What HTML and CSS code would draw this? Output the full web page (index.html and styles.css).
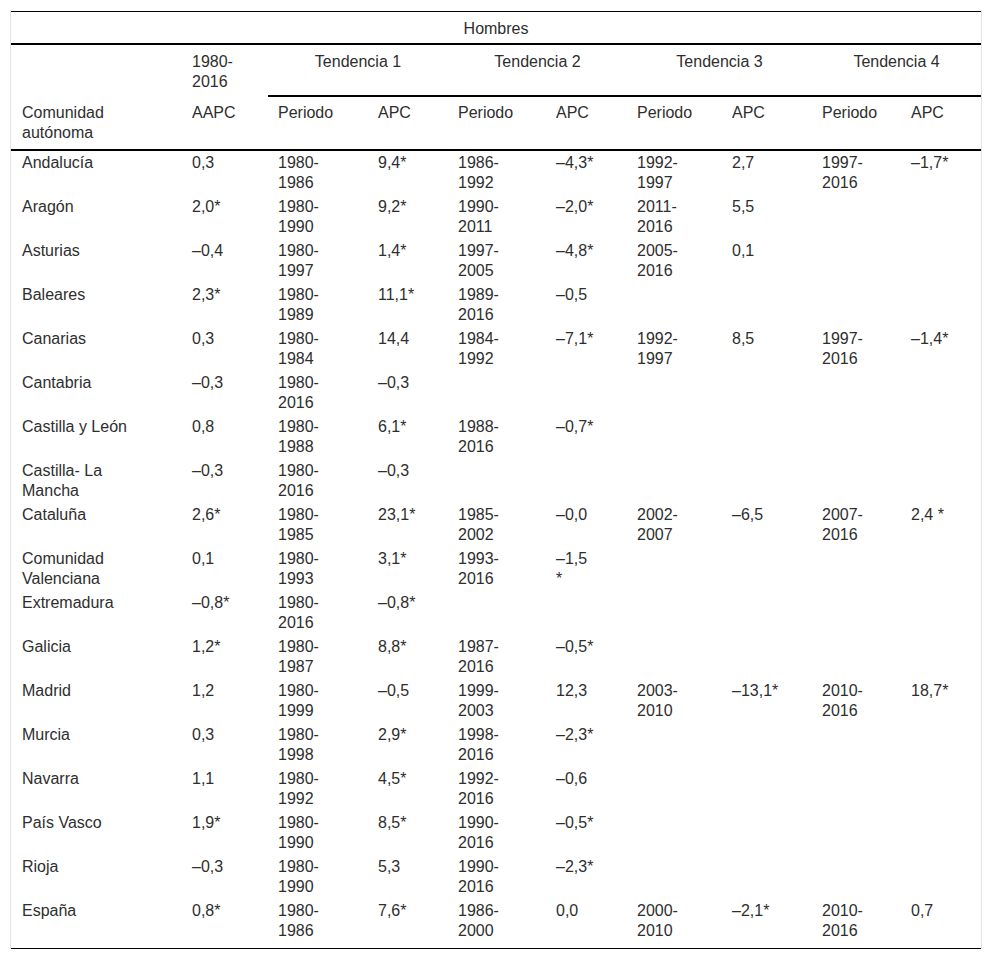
FILE: index.html
```html
<!DOCTYPE html>
<html lang="es">
<head>
<meta charset="utf-8">
<title>Hombres</title>
<link rel="stylesheet" href="styles.css">
</head>
<body>
<div class="wrap">
<table class="tbl">
<colgroup>
<col class="c-name"><col class="c-aapc"><col class="c-p1"><col class="c-a1"><col class="c-p2"><col class="c-a2"><col class="c-p3"><col class="c-a3"><col class="c-p4"><col class="c-a4">
</colgroup>
<thead>
<tr class="r1"><th colspan="10">Hombres</th></tr>
<tr class="r2">
<th></th>
<th class="yr">1980-<wbr>2016</th>
<th class="tend" colspan="2">Tendencia 1</th>
<th class="tend" colspan="2">Tendencia 2</th>
<th class="tend" colspan="2">Tendencia 3</th>
<th class="tend" colspan="2">Tendencia 4</th>
</tr>
<tr class="r3">
<th class="first">Comunidad<br>autónoma</th>
<th>AAPC</th>
<th>Periodo</th><th>APC</th>
<th>Periodo</th><th>APC</th>
<th>Periodo</th><th>APC</th>
<th>Periodo</th><th>APC</th>
</tr>
</thead>
<tbody>
<tr><td>Andalucía</td><td>0,3</td><td>1980-<wbr>1986</td><td>9,4*</td><td>1986-<wbr>1992</td><td>–4,3*</td><td>1992-<wbr>1997</td><td>2,7</td><td>1997-<wbr>2016</td><td>–1,7*</td></tr>
<tr><td>Aragón</td><td>2,0*</td><td>1980-<wbr>1990</td><td>9,2*</td><td>1990-<wbr>2011</td><td>–2,0*</td><td>2011-<wbr>2016</td><td>5,5</td><td></td><td></td></tr>
<tr><td>Asturias</td><td>–0,4</td><td>1980-<wbr>1997</td><td>1,4*</td><td>1997-<wbr>2005</td><td>–4,8*</td><td>2005-<wbr>2016</td><td>0,1</td><td></td><td></td></tr>
<tr><td>Baleares</td><td>2,3*</td><td>1980-<wbr>1989</td><td>11,1*</td><td>1989-<wbr>2016</td><td>–0,5</td><td></td><td></td><td></td><td></td></tr>
<tr><td>Canarias</td><td>0,3</td><td>1980-<wbr>1984</td><td>14,4</td><td>1984-<wbr>1992</td><td>–7,1*</td><td>1992-<wbr>1997</td><td>8,5</td><td>1997-<wbr>2016</td><td>–1,4*</td></tr>
<tr><td>Cantabria</td><td>–0,3</td><td>1980-<wbr>2016</td><td>–0,3</td><td></td><td></td><td></td><td></td><td></td><td></td></tr>
<tr><td>Castilla y León</td><td>0,8</td><td>1980-<wbr>1988</td><td>6,1*</td><td>1988-<wbr>2016</td><td>–0,7*</td><td></td><td></td><td></td><td></td></tr>
<tr><td>Castilla- La<br>Mancha</td><td>–0,3</td><td>1980-<wbr>2016</td><td>–0,3</td><td></td><td></td><td></td><td></td><td></td><td></td></tr>
<tr><td>Cataluña</td><td>2,6*</td><td>1980-<wbr>1985</td><td>23,1*</td><td>1985-<wbr>2002</td><td>–0,0</td><td>2002-<wbr>2007</td><td>–6,5</td><td>2007-<wbr>2016</td><td>2,4 *</td></tr>
<tr><td>Comunidad<br>Valenciana</td><td>0,1</td><td>1980-<wbr>1993</td><td>3,1*</td><td>1993-<wbr>2016</td><td>–1,5<br>*</td><td></td><td></td><td></td><td></td></tr>
<tr><td>Extremadura</td><td>–0,8*</td><td>1980-<wbr>2016</td><td>–0,8*</td><td></td><td></td><td></td><td></td><td></td><td></td></tr>
<tr><td>Galicia</td><td>1,2*</td><td>1980-<wbr>1987</td><td>8,8*</td><td>1987-<wbr>2016</td><td>–0,5*</td><td></td><td></td><td></td><td></td></tr>
<tr><td>Madrid</td><td>1,2</td><td>1980-<wbr>1999</td><td>–0,5</td><td>1999-<wbr>2003</td><td>12,3</td><td>2003-<wbr>2010</td><td>–13,1*</td><td>2010-<wbr>2016</td><td>18,7*</td></tr>
<tr><td>Murcia</td><td>0,3</td><td>1980-<wbr>1998</td><td>2,9*</td><td>1998-<wbr>2016</td><td>–2,3*</td><td></td><td></td><td></td><td></td></tr>
<tr><td>Navarra</td><td>1,1</td><td>1980-<wbr>1992</td><td>4,5*</td><td>1992-<wbr>2016</td><td>–0,6</td><td></td><td></td><td></td><td></td></tr>
<tr><td>País Vasco</td><td>1,9*</td><td>1980-<wbr>1990</td><td>8,5*</td><td>1990-<wbr>2016</td><td>–0,5*</td><td></td><td></td><td></td><td></td></tr>
<tr><td>Rioja</td><td>–0,3</td><td>1980-<wbr>1990</td><td>5,3</td><td>1990-<wbr>2016</td><td>–2,3*</td><td></td><td></td><td></td><td></td></tr>
<tr class="last"><td>España</td><td>0,8*</td><td>1980-<wbr>1986</td><td>7,6*</td><td>1986-<wbr>2000</td><td>0,0</td><td>2000-<wbr>2010</td><td>–2,1*</td><td>2010-<wbr>2016</td><td>0,7</td></tr>
</tbody>
</table>
</div>
</body>
</html>
```

FILE: styles.css
```css
html, body {
  margin: 0;
  padding: 0;
  background: #fff;
}

body {
  font-family: "Liberation Sans", Arial, sans-serif;
  color: #2e2e2e;
}

.wrap {
  margin: 10px 0 0 10px;
  width: 970px;
  padding-top: 1px;
  border-left: 1px solid #e3e3e3;
  border-right: 1px solid #e3e3e3;
}

.tbl {
  width: 970px;
  table-layout: fixed;
  border-collapse: separate;
  border-spacing: 0;
  border-top: 1px solid #000;
  border-bottom: 1px solid #000;
  font-size: 16px;
  line-height: 20px;
}

.c-name { width: 171px; }
.c-aapc { width: 86px; }
.c-p1 { width: 100px; }
.c-a1 { width: 80px; }
.c-p2 { width: 98px; }
.c-a2 { width: 81px; }
.c-p3 { width: 95px; }
.c-a3 { width: 90px; }
.c-p4 { width: 89px; }
.c-a4 { width: 80px; }

.tbl th,
.tbl td {
  padding: 2px 16px 2px 10px;
  text-align: left;
  vertical-align: top;
  font-weight: normal;
}

.tbl td:first-child,
.tbl th.first {
  padding-left: 11px;
}

.r1 th {
  padding: 7px 10px 4px;
  text-align: center;
  border-bottom: 2px solid #000;
}

.r2 th {
  padding-top: 7px;
  padding-bottom: 5px;
}

.r2 th.tend {
  padding: 7px 10px 3px;
  text-align: center;
  border-bottom: 2px solid #000;
}

.r3 th {
  padding-top: 6px;
  padding-bottom: 6px;
  border-bottom: 2px solid #000;
}

.tbl tr.last td {
  padding-bottom: 7px;
}
```
